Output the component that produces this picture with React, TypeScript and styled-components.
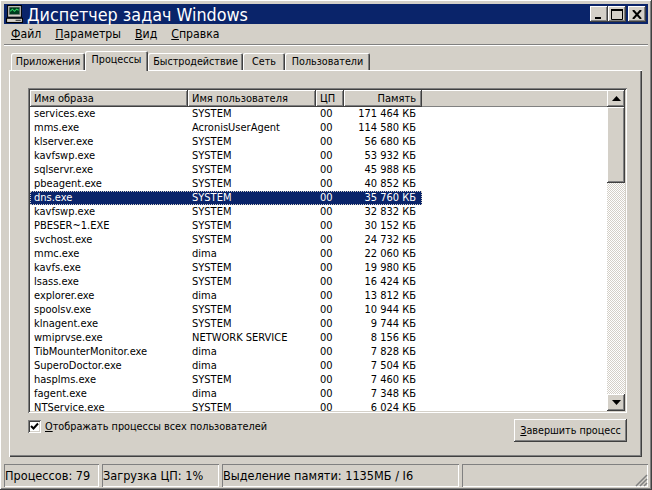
import React from "react";
import styled, { createGlobalStyle } from "styled-components";

const face = "#d4d0c8";
const raised = "inset -1px -1px 0 #404040, inset 1px 1px 0 #fff, inset -2px -2px 0 #808080, inset 2px 2px 0 #d4d0c8";
const sunken = "inset 1px 1px 0 #808080, inset -1px -1px 0 #fff, inset 2px 2px 0 #404040, inset -2px -2px 0 #d4d0c8";

const GlobalStyle = createGlobalStyle`
  html, body { margin: 0; padding: 0; background: ${face}; }
  * { box-sizing: border-box; }
  body { font-family: "DejaVu Sans Condensed", "DejaVu Sans", sans-serif; font-size: 11px; color: #000; }
`;

const Win = styled.div`
  width: 652px;
  height: 490px;
  padding: 4px;
  background: ${face};
  box-shadow: ${raised};
  display: flex;
  flex-direction: column;
  overflow: hidden;
`;

const TitleBar = styled.div`
  height: 20px;
  flex: none;
  background: #0a246a;
  color: #fff;
  display: flex;
  align-items: center;
  padding: 0 2px 0 2px;
`;

const TitleText = styled.div`
  flex: 1;
  margin-left: 4px;
  font-size: 17.8px;
  white-space: nowrap;
`;

const CapButton = styled.div<{ $gap?: number }>`
  width: 18px;
  height: 16px;
  margin-left: ${(p) => p.$gap ?? 0}px;
  background: ${face};
  box-shadow: ${raised};
  display: flex;
  align-items: center;
  justify-content: center;
`;

const MenuBar = styled.div`
  height: 21px;
  flex: none;
  display: flex;
  align-items: center;
  gap: 14px;
  padding-left: 7px;
  font-size: 12.2px;
  border-bottom: 1px solid #808080;
  box-shadow: 0 1px 0 #fff;
`;

const Underlined = styled.span`
  text-decoration: underline;
  text-underline-offset: 1px;
`;

const TabStrip = styled.div`
  display: flex;
  align-items: flex-end;
  height: 19px;
  margin: 6px 0 0 7px;
  flex: none;
  position: relative;
  z-index: 1;
  font-size: 10.7px;
`;

const Tab = styled.div<{ $active?: boolean; $w: number }>`
  width: ${(p) => p.$w}px;
  height: ${(p) => (p.$active ? 20 : 17)}px;
  margin-bottom: ${(p) => (p.$active ? -1 : 0)}px;
  background: ${face};
  border-radius: 2px 2px 0 0;
  box-shadow: inset 1px 1px 0 #fff, inset -1px 0 0 #404040, inset -2px 0 0 #808080;
  display: flex;
  align-items: center;
  justify-content: center;
  padding-bottom: ${(p) => (p.$active ? 3 : 0)}px;
  white-space: nowrap;
`;

const Panel = styled.div`
  height: 387px;
  margin: 0 6px 0 5px;
  flex: none;
  background: ${face};
  box-shadow: inset 1px 1px 0 #fff, inset -1px -1px 0 #404040, inset -2px -2px 0 #808080;
  padding: 18px 15px 0 19px;
`;

const ListFrame = styled.div`
  height: 325px;
  background: #fff;
  box-shadow: ${sunken};
  padding: 2px;
  display: flex;
`;

const ListBody = styled.div`
  flex: 1;
`;

const HeaderRow = styled.div`
  display: flex;
  height: 17px;
`;

const HeaderCell = styled.div<{ $w: number; $right?: boolean }>`
  width: ${(p) => p.$w}px;
  flex: none;
  background: ${face};
  box-shadow: inset -1px -1px 0 #404040, inset 1px 1px 0 #fff, inset -2px -2px 0 #808080;
  padding: 1px 6px 0 4px;
  text-align: ${(p) => (p.$right ? "right" : "left")};
  line-height: 15px;
  white-space: nowrap;
`;

const HeaderFill = styled.div`
  flex: 1;
  background: ${face};
  box-shadow: inset 0 -1px 0 #808080, inset 0 1px 0 #fff;
`;

const Row = styled.div<{ $selected?: boolean }>`
  display: flex;
  height: 14px;
  width: 392px;
  line-height: 14px;
  white-space: nowrap;
  background: ${(p) => (p.$selected ? "#0a246a" : "transparent")};
  color: ${(p) => (p.$selected ? "#fff" : "#000")};
  outline: ${(p) => (p.$selected ? "1px dotted #d4d0c8" : "none")};
  outline-offset: -1px;
`;

const Cell = styled.div<{ $w: number; $right?: boolean }>`
  width: ${(p) => p.$w}px;
  flex: none;
  padding: 0 6px 0 4px;
  text-align: ${(p) => (p.$right ? "right" : "left")};
`;

const ScrollBar = styled.div`
  width: 18px;
  flex: none;
  display: flex;
  flex-direction: column;
  background-color: #fff;
  background-image: conic-gradient(${face} 25%, #fff 0 50%, ${face} 0 75%, #fff 0);
  background-size: 2px 2px;
`;

const ScrollButton = styled.div`
  height: 17px;
  flex: none;
  background: ${face};
  box-shadow: ${raised};
  display: flex;
  align-items: center;
  justify-content: center;
`;

const ScrollThumb = styled.div`
  height: 76px;
  flex: none;
  background: ${face};
  box-shadow: ${raised};
`;

const ScrollTrack = styled.div`
  flex: 1;
`;

const Controls = styled.div`
  display: flex;
  justify-content: space-between;
  align-items: flex-start;
`;

const CheckLabel = styled.div`
  display: flex;
  align-items: center;
  gap: 4px;
  margin-top: 7px;
  font-size: 10.8px;
`;

const CheckBox = styled.div`
  width: 13px;
  height: 13px;
  background: #fff;
  box-shadow: ${sunken};
  display: flex;
  align-items: center;
  justify-content: center;
`;

const EndButton = styled.div`
  width: 113px;
  height: 23px;
  margin-top: 6px;
  background: ${face};
  box-shadow: ${raised};
  display: flex;
  align-items: center;
  justify-content: center;
  font-size: 10.7px;
`;

const StatusBar = styled.div`
  display: flex;
  gap: 3px;
  margin-top: 7px;
  height: 23px;
  flex: none;
  font-size: 12.6px;
`;

const StatusCell = styled.div<{ $w?: number }>`
  width: ${(p) => (p.$w ? `${p.$w}px` : "auto")};
  flex: ${(p) => (p.$w ? "none" : 1)};
  box-shadow: inset 1px 1px 0 #808080, inset -1px -1px 0 #fff;
  display: flex;
  align-items: center;
  padding-left: 1px;
  white-space: nowrap;
  position: relative;
`;

const Grip = styled.svg`
  position: absolute;
  right: 0;
  bottom: 0;
`;

const cols = [158, 128, 28, 78];

const rows: [string, string, string][] = [
  ["services.exe", "SYSTEM", "171 464 КБ"],
  ["mms.exe", "AcronisUserAgent", "114 580 КБ"],
  ["klserver.exe", "SYSTEM", "56 680 КБ"],
  ["kavfswp.exe", "SYSTEM", "53 932 КБ"],
  ["sqlservr.exe", "SYSTEM", "45 988 КБ"],
  ["pbeagent.exe", "SYSTEM", "40 852 КБ"],
  ["dns.exe", "SYSTEM", "35 760 КБ"],
  ["kavfswp.exe", "SYSTEM", "32 832 КБ"],
  ["PBESER~1.EXE", "SYSTEM", "30 152 КБ"],
  ["svchost.exe", "SYSTEM", "24 732 КБ"],
  ["mmc.exe", "dima", "22 060 КБ"],
  ["kavfs.exe", "SYSTEM", "19 980 КБ"],
  ["lsass.exe", "SYSTEM", "16 424 КБ"],
  ["explorer.exe", "dima", "13 812 КБ"],
  ["spoolsv.exe", "SYSTEM", "10 944 КБ"],
  ["klnagent.exe", "SYSTEM", "9 744 КБ"],
  ["wmiprvse.exe", "NETWORK SERVICE", "8 156 КБ"],
  ["TibMounterMonitor.exe", "dima", "7 828 КБ"],
  ["SuperoDoctor.exe", "dima", "7 504 КБ"],
  ["hasplms.exe", "SYSTEM", "7 460 КБ"],
  ["fagent.exe", "dima", "7 348 КБ"],
  ["NTService.exe", "SYSTEM", "6 024 КБ"],
];

const AppIcon = () => (
  <svg width="17" height="18" viewBox="0 0 16 17">
    <rect x="1.5" y="0.5" width="13" height="11" fill="#d4d0c8" stroke="#000" />
    <rect x="3" y="2" width="10" height="7" fill="#003c1e" stroke="#808080" strokeWidth="0.5" />
    <path d="M4 6l2-2 2 2 2-2 2 1" fill="none" stroke="#2fd060" />
    <rect x="0.5" y="12.5" width="15" height="4" fill="#d4d0c8" stroke="#000" />
    <rect x="9" y="14" width="5" height="1" fill="#404040" />
  </svg>
);

const Arrow = ({ up }: { up?: boolean }) => (
  <svg width="9" height="5" viewBox="0 0 9 5">
    <path d={up ? "M4.5 0L9 5H0z" : "M0 0h9L4.5 5z"} fill="#000" />
  </svg>
);

export default function App() {
  return (
    <Win>
      <GlobalStyle />
      <TitleBar>
        <AppIcon />
        <TitleText>Диспетчер задач Windows</TitleText>
        <CapButton>
          <svg width="10" height="10" viewBox="0 0 10 10">
            <rect x="1" y="8" width="6" height="2" fill="#000" />
          </svg>
        </CapButton>
        <CapButton>
          <svg width="12" height="11" viewBox="0 0 12 11">
            <path d="M.5 1.5h11v9H.5z" fill="none" stroke="#000" />
            <rect y="0" width="12" height="2" fill="#000" />
          </svg>
        </CapButton>
        <CapButton $gap={2}>
          <svg width="10" height="9" viewBox="0 0 10 9">
            <path d="M1 0l8 9M9 0L1 9" stroke="#000" strokeWidth="2" />
          </svg>
        </CapButton>
      </TitleBar>
      <MenuBar>
        <span><Underlined>Ф</Underlined>айл</span>
        <span><Underlined>П</Underlined>араметры</span>
        <span><Underlined>В</Underlined>ид</span>
        <span><Underlined>С</Underlined>правка</span>
      </MenuBar>
      <TabStrip>
        <Tab $w={74}>Приложения</Tab>
        <Tab $w={63} $active>Процессы</Tab>
        <Tab $w={95}>Быстродействие</Tab>
        <Tab $w={42}>Сеть</Tab>
        <Tab $w={85}>Пользователи</Tab>
      </TabStrip>
      <Panel>
        <ListFrame>
          <ListBody>
            <HeaderRow>
              <HeaderCell $w={cols[0]}>Имя образа</HeaderCell>
              <HeaderCell $w={cols[1]}>Имя пользователя</HeaderCell>
              <HeaderCell $w={cols[2]}>ЦП</HeaderCell>
              <HeaderCell $w={cols[3]} $right>Память</HeaderCell>
              <HeaderFill />
            </HeaderRow>
            {rows.map(([name, user, mem]) => (
              <Row key={name + mem} $selected={name === "dns.exe"}>
                <Cell $w={cols[0]}>{name}</Cell>
                <Cell $w={cols[1]}>{user}</Cell>
                <Cell $w={cols[2]}>00</Cell>
                <Cell $w={cols[3]} $right>{mem}</Cell>
              </Row>
            ))}
          </ListBody>
          <ScrollBar>
            <ScrollButton><Arrow up /></ScrollButton>
            <ScrollThumb />
            <ScrollTrack />
            <ScrollButton><Arrow /></ScrollButton>
          </ScrollBar>
        </ListFrame>
        <Controls>
          <CheckLabel>
            <CheckBox>
              <svg width="9" height="9" viewBox="0 0 9 9">
                <path d="M1 4l2.5 2.5L8 1.5" fill="none" stroke="#000" strokeWidth="2" />
              </svg>
            </CheckBox>
            <span><Underlined>О</Underlined>тображать процессы всех пользователей</span>
          </CheckLabel>
          <EndButton><span><Underlined>З</Underlined>авершить процесс</span></EndButton>
        </Controls>
      </Panel>
      <StatusBar>
        <StatusCell $w={95}>Процессов: 79</StatusCell>
        <StatusCell $w={117}>Загрузка ЦП: 1%</StatusCell>
        <StatusCell $w={237}>Выделение памяти: 1135МБ / I6</StatusCell>
        <StatusCell>
          <Grip width="14" height="14" viewBox="0 0 14 14">
            <path d="M13 2L2 13M13 6L6 13M13 10L10 13" stroke="#808080" strokeWidth="1.5" fill="none" />
          </Grip>
        </StatusCell>
      </StatusBar>
    </Win>
  );
}
